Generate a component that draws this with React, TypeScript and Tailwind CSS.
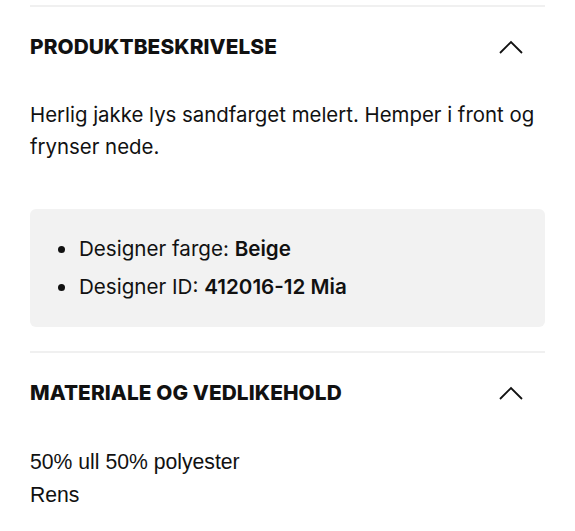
import { useState } from "react";

function Chevron({ open }: { open: boolean }) {
  return (
    <svg
      width="24"
      height="14"
      viewBox="0 0 24 14"
      fill="none"
      stroke="#111"
      strokeWidth="1.8"
      className={open ? "" : "rotate-180"}
    >
      <path d="M1 13 L12 2 L23 13" />
    </svg>
  );
}

function Bullet({ label, value }: { label: string; value: string }) {
  return (
    <li className="flex items-center">
      <span className="mr-[14px] h-[7px] w-[7px] shrink-0 rounded-full bg-[#111]" />
      <span>
        {label} <strong className="font-semibold">{value}</strong>
      </span>
    </li>
  );
}

export default function App() {
  const [descOpen, setDescOpen] = useState(true);
  const [matOpen, setMatOpen] = useState(true);

  return (
    <div className="min-h-[531px] bg-white px-[30px] pt-[5px] text-[#111] [font-family:Inter,'Noto_Sans',sans-serif]">
      <div className="border-t-2 border-[#f0f0f0]">
        <button
          className="flex h-[82px] w-full items-center justify-between pb-[2px] text-left"
          onClick={() => setDescOpen(!descOpen)}
        >
          <span className="text-[20.8px] font-extrabold tracking-[0.1px]">PRODUKTBESKRIVELSE</span>
          <span className="mr-[22px]">
            <Chevron open={descOpen} />
          </span>
        </button>

        {descOpen && (
          <div className="pb-[24px] pt-[10px]">
            <p className="text-[20.4px] leading-[32px]">
              Herlig jakke lys sandfarget melert. Hemper i front og frynser nede.
            </p>
            <div className="mt-[46px] rounded-[6px] bg-[#f2f2f2] py-[21px] pl-[28px]">
              <ul className="text-[20.6px] leading-[38px]">
                <Bullet label="Designer farge:" value="Beige" />
                <Bullet label="Designer ID:" value="412016-12 Mia" />
              </ul>
            </div>
          </div>
        )}
      </div>

      <div className="border-t-2 border-[#f0f0f0]">
        <button
          className="flex h-[80px] w-full items-center justify-between text-left"
          onClick={() => setMatOpen(!matOpen)}
        >
          <span className="text-[20.8px] font-extrabold tracking-[0.1px]">MATERIALE OG VEDLIKEHOLD</span>
          <span className="mr-[22px]">
            <Chevron open={matOpen} />
          </span>
        </button>

        {matOpen && (
          <div className="pt-[12px] text-[21.2px] leading-[33px] [font-family:'Liberation_Sans',Arial,sans-serif]">
            <p>50% ull 50% polyester</p>
            <p>Rens</p>
          </div>
        )}
      </div>
    </div>
  );
}
